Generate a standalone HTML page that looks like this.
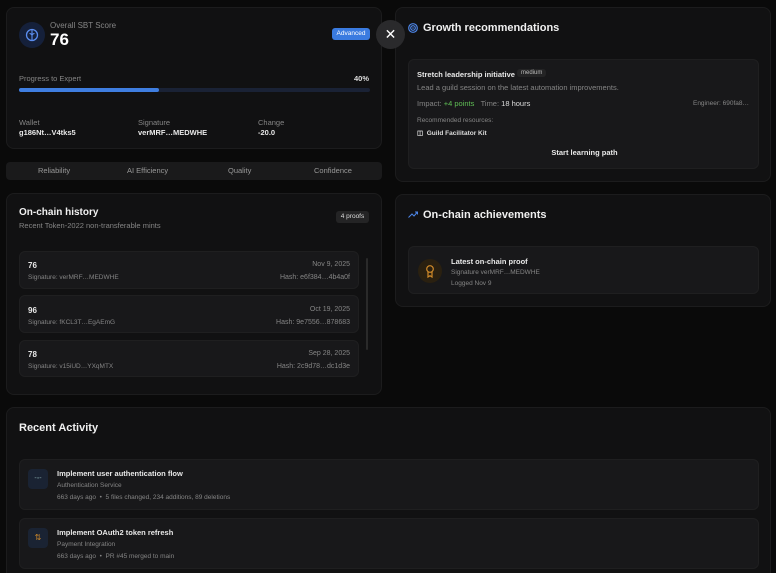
<!DOCTYPE html>
<html><head><meta charset="utf-8"><style>
*{box-sizing:border-box;margin:0;padding:0}
html,body{width:776px;height:573px;overflow:hidden}
body{background:#0a0a0a;font-family:"Liberation Sans",sans-serif;color:#e8e8e8;position:relative}
.card{position:absolute;background:#111112;border:1px solid #1c1c1d;border-radius:8px}
.a{position:absolute}
.inner{position:absolute;background:#18181a;border:1px solid #1f1f20;border-radius:6px}
.mut{color:#858585}
</style></head><body>

<div class="card" style="left:6px;top:7px;width:376px;height:142px">
  <div class="a" style="left:12px;top:14px;width:26px;height:26px;border-radius:50%;background:#15203a"></div>
  <svg class="a" style="left:18px;top:20px" width="14" height="14" viewBox="0 0 14 14"><circle cx="7" cy="7" r="5.5" fill="none" stroke="#5b8def" stroke-width="1.3"/><path d="M7 2v10M4.5 5.5c1 0 2.5 1 2.5 2M9.5 5.5c-1 0-2.5 1-2.5 2" fill="none" stroke="#5b8def" stroke-width="1.1"/></svg>
  <div class="a mut" style="left:43px;top:13px;font-size:8px">Overall SBT Score</div>
  <div class="a" style="left:43px;top:22px;font-size:17px;font-weight:bold;color:#fff">76</div>
  <div class="a" style="left:325px;top:20px;width:38px;height:12px;background:#3a7be0;border-radius:3px;font-size:6.5px;color:#fff;text-align:center;line-height:12px">Advanced</div>
  <div class="a mut" style="left:12px;top:66px;font-size:7.5px">Progress to Expert</div>
  <div class="a" style="left:347px;top:66px;font-size:7.5px;font-weight:bold;color:#ddd">40%</div>
  <div class="a" style="left:12px;top:80px;width:351px;height:4px;background:#1a2235;border-radius:2px"><div style="width:140px;height:4px;background:#3f7ee0;border-radius:2px"></div></div>
  <div class="a mut" style="left:12px;top:110px;font-size:7.5px">Wallet</div>
  <div class="a" style="left:12px;top:120px;font-size:7.5px;font-weight:bold">g186Nt…V4tks5</div>
  <div class="a mut" style="left:131px;top:110px;font-size:7.5px">Signature</div>
  <div class="a" style="left:131px;top:120px;font-size:7.5px;font-weight:bold">verMRF…MEDWHE</div>
  <div class="a mut" style="left:251px;top:110px;font-size:7.5px">Change</div>
  <div class="a" style="left:251px;top:120px;font-size:7.5px;font-weight:bold">-20.0</div>
</div>

<div class="a" style="left:6px;top:162px;width:376px;height:18px;background:#1a1a1b;border-radius:4px;font-size:7.5px;color:#999">
  <span class="a" style="left:32px;top:4px">Reliability</span>
  <span class="a" style="left:121px;top:4px">AI Efficiency</span>
  <span class="a" style="left:222px;top:4px">Quality</span>
  <span class="a" style="left:308px;top:4px">Confidence</span>
</div>

<div class="card" style="left:6px;top:193px;width:376px;height:202px">
  <div class="a" style="left:12px;top:13px;font-size:10px;font-weight:bold;color:#f0f0f0">On-chain history</div>
  <div class="a mut" style="left:12px;top:27px;font-size:7.5px">Recent Token-2022 non-transferable mints</div>
  <div class="a" style="left:329px;top:17px;width:33px;height:12px;background:#242425;border-radius:3px;font-size:6.5px;text-align:center;line-height:12px;color:#ddd">4 proofs</div>
  <div class="a" style="left:359px;top:64px;width:2px;height:92px;background:#2a2a2a;border-radius:1px"></div>
  <div class="inner" style="left:12px;top:57px;width:340px;height:38px">
    <div class="a" style="left:8px;top:9px;font-size:8px;font-weight:bold">76</div><div class="a mut" style="left:8px;top:22px;font-size:6.5px">Signature: verMRF…MEDWHE</div>
    <div class="a mut" style="right:8px;top:9px;font-size:7px">Nov 9, 2025</div><div class="a mut" style="right:8px;top:22px;font-size:7px">Hash: e6f384…4b4a0f</div></div>
  <div class="inner" style="left:12px;top:101px;width:340px;height:38px">
    <div class="a" style="left:8px;top:10px;font-size:8px;font-weight:bold">96</div><div class="a mut" style="left:8px;top:23px;font-size:6.5px">Signature: fKCL3T…EgAEmG</div>
    <div class="a mut" style="right:8px;top:10px;font-size:7px">Oct 19, 2025</div><div class="a mut" style="right:8px;top:23px;font-size:7px">Hash: 9e7556…878683</div></div>
  <div class="inner" style="left:12px;top:146px;width:340px;height:37px">
    <div class="a" style="left:8px;top:9px;font-size:8px;font-weight:bold">78</div><div class="a mut" style="left:8px;top:22px;font-size:6.5px">Signature: v15iUD…YXqMTX</div>
    <div class="a mut" style="right:8px;top:9px;font-size:7px">Sep 28, 2025</div><div class="a mut" style="right:8px;top:22px;font-size:7px">Hash: 2c9d78…dc1d3e</div></div>
</div>

<div class="card" style="left:395px;top:7px;width:376px;height:175px">
  <svg class="a" style="left:12px;top:15px" width="10" height="10" viewBox="0 0 10 10"><circle cx="5" cy="5" r="4.3" fill="none" stroke="#4d86e8" stroke-width="1.2"/><circle cx="5" cy="5" r="2.3" fill="none" stroke="#4d86e8" stroke-width="1.2"/><circle cx="5" cy="5" r=".8" fill="#4d86e8"/></svg>
  <div class="a" style="left:27px;top:14px;font-size:11px;font-weight:bold;color:#f0f0f0">Growth recommendations</div>
  <div class="inner" style="left:12px;top:51px;width:351px;height:110px">
    <div class="a" style="left:8px;top:10px;font-size:7.5px;font-weight:bold">Stretch leadership initiative</div>
    <div class="a" style="left:108px;top:9px;padding:1px 4px;background:#242425;border-radius:3px;font-size:6px;color:#bbb">medium</div>
    <div class="a mut" style="left:8px;top:23px;font-size:7.5px">Lead a guild session on the latest automation improvements.</div>
    <div class="a mut" style="left:8px;top:39px;font-size:7.5px">Impact: <span style="color:#5fbf55">+4 points</span>&nbsp;&nbsp;&nbsp;Time: <span style="color:#ddd">18 hours</span></div>
    <div class="a mut" style="right:9px;top:40px;font-size:6.5px">Engineer: 690fa8…</div>
    <div class="a mut" style="left:8px;top:57px;font-size:6.5px">Recommended resources:</div>
    <div class="a" style="left:8px;top:69px;font-size:6.5px;font-weight:bold;color:#ddd">&#9707;&nbsp; Guild Facilitator Kit</div>
    <div class="a" style="left:0;width:351px;top:88px;font-size:7.5px;font-weight:bold;text-align:center">Start learning path</div>
  </div>
</div>

<div class="a" style="left:376px;top:20px;width:29px;height:29px;border-radius:50%;background:#2a2a2c;color:#fff;font-size:14px;text-align:center;line-height:29px">✕</div>

<div class="card" style="left:395px;top:194px;width:376px;height:113px">
  <svg class="a" style="left:12px;top:16px" width="10" height="7" viewBox="0 0 10 7"><path d="M.5 6.5 4 3l2 2L9.5 1M7 1h2.5v2.5" fill="none" stroke="#4d86e8" stroke-width="1"/></svg>
  <div class="a" style="left:27px;top:14px;font-size:11px;font-weight:bold;color:#f0f0f0">On-chain achievements</div>
  <div class="inner" style="left:12px;top:51px;width:351px;height:48px">
    <div class="a" style="left:9px;top:12px;width:24px;height:24px;border-radius:50%;background:#2a2010"></div>
    <svg class="a" style="left:16px;top:17px" width="10" height="14" viewBox="0 0 10 14"><circle cx="5" cy="5" r="3.3" fill="none" stroke="#d08a2a" stroke-width="1.2"/><path d="M3 8v5l2-1.3 2 1.3V8" fill="none" stroke="#d08a2a" stroke-width="1.2"/></svg>
    <div class="a" style="left:42px;top:10px;font-size:7.5px;font-weight:bold">Latest on-chain proof</div>
    <div class="a mut" style="left:42px;top:22px;font-size:6.5px">Signature verMRF…MEDWHE</div>
    <div class="a mut" style="left:42px;top:33px;font-size:6.5px">Logged Nov 9</div>
  </div>
</div>

<div class="card" style="left:6px;top:407px;width:765px;height:180px">
  <div class="a" style="left:12px;top:14px;font-size:11px;font-weight:bold;color:#f0f0f0">Recent Activity</div>
  <div class="inner" style="left:12px;top:51px;width:740px;height:51px">
    <div class="a" style="left:8px;top:9px;width:20px;height:20px;border-radius:4px;background:#1a2333;color:#8aa;font-size:7px;text-align:center;line-height:20px">-◦-</div>
    <div class="a" style="left:37px;top:9px;font-size:7.5px;font-weight:bold">Implement user authentication flow</div>
    <div class="a mut" style="left:37px;top:22px;font-size:6.5px">Authentication Service</div>
    <div class="a mut" style="left:37px;top:34px;font-size:6.5px">663 days ago &nbsp;•&nbsp; 5 files changed, 234 additions, 89 deletions</div>
  </div>
  <div class="inner" style="left:12px;top:110px;width:740px;height:51px">
    <div class="a" style="left:8px;top:9px;width:20px;height:20px;border-radius:4px;background:#1a2333;color:#d08a2a;font-size:8px;text-align:center;line-height:20px">⇅</div>
    <div class="a" style="left:37px;top:9px;font-size:7.5px;font-weight:bold">Implement OAuth2 token refresh</div>
    <div class="a mut" style="left:37px;top:22px;font-size:6.5px">Payment Integration</div>
    <div class="a mut" style="left:37px;top:34px;font-size:6.5px">663 days ago &nbsp;•&nbsp; PR #45 merged to main</div>
  </div>
</div>
</body></html>
